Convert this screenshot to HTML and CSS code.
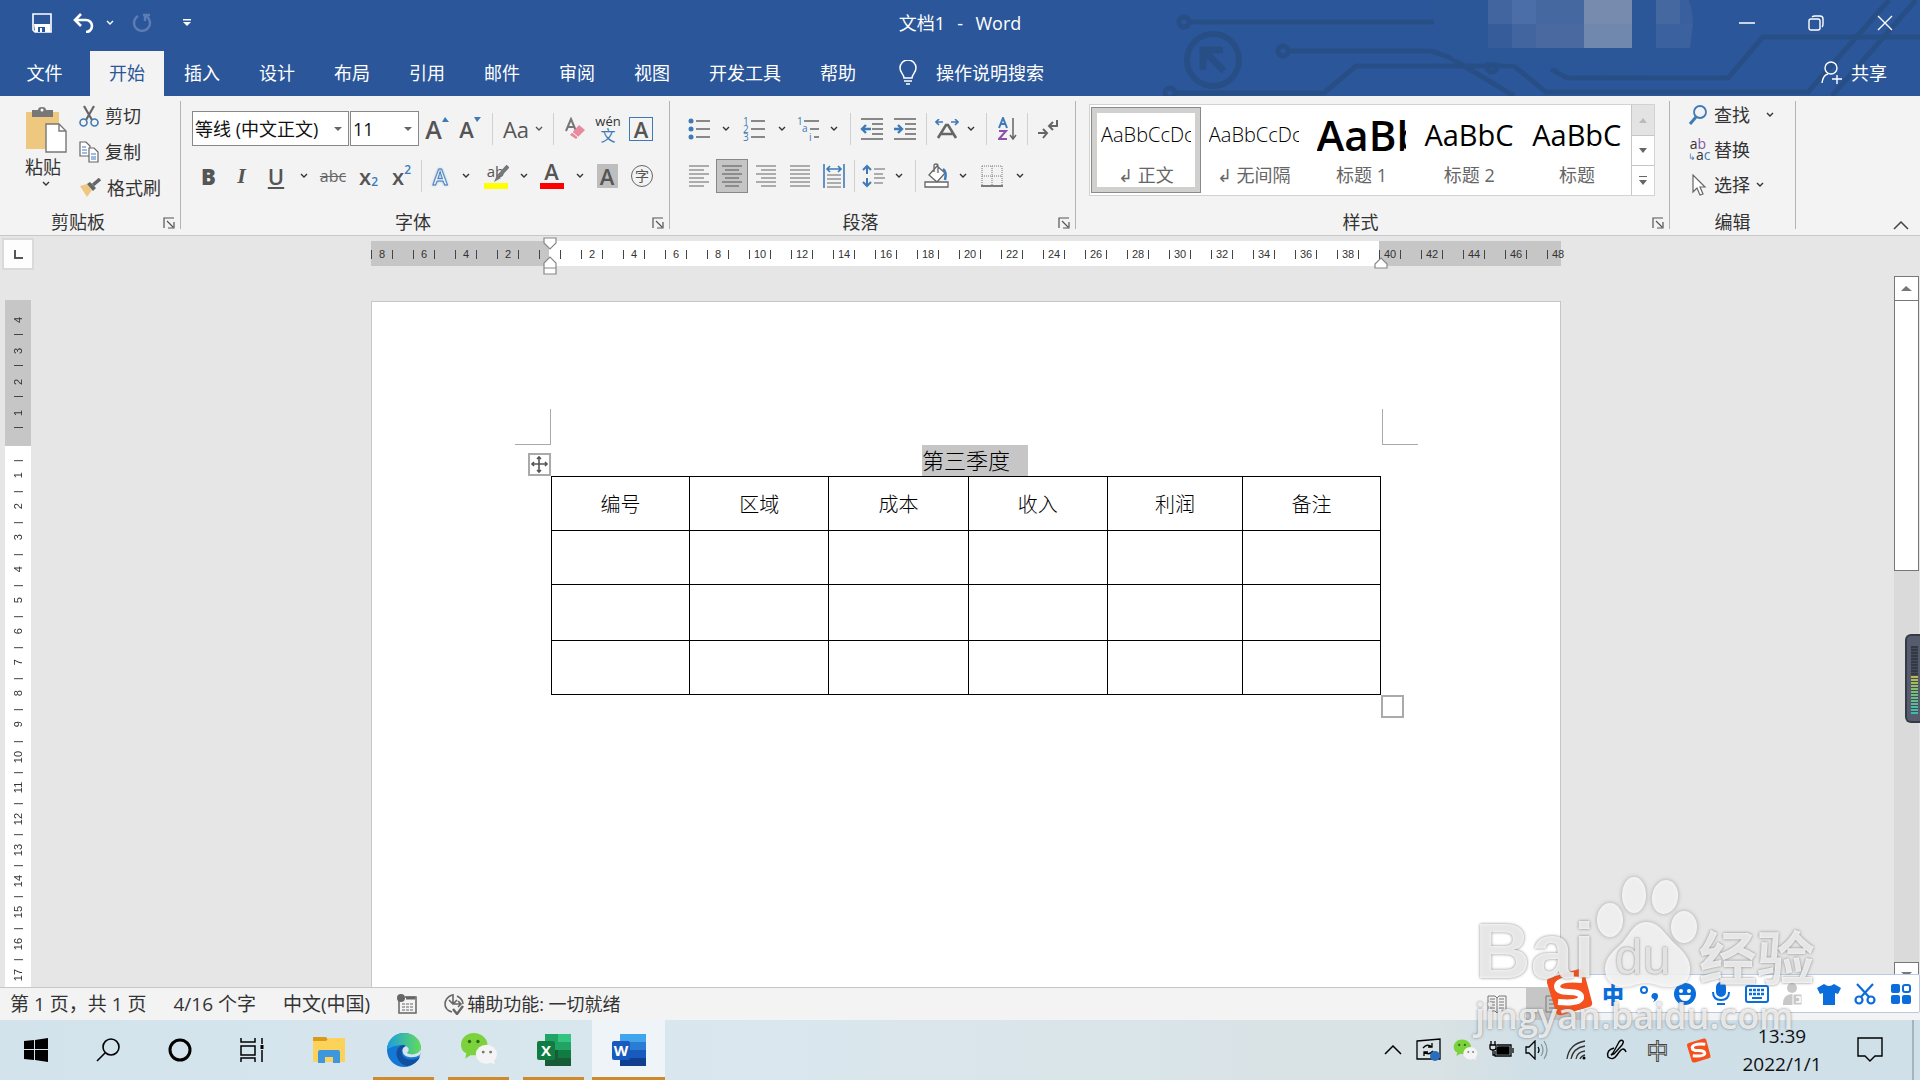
FILE: index.html
```html
<!DOCTYPE html>
<html lang="zh-CN">
<head>
    <meta charset="UTF-8">
    <meta name="viewport" content="width=device-width, initial-scale=1.0">
    <title>文档1 - Word</title>
    <link rel="stylesheet" href="styles.css">
</head>
<body>
    <!-- Shared icons -->
    <svg class="sprite" aria-hidden="true">
        <symbol id="chev" viewBox="0 0 8 6"><path d="M1 1l3 3 3-3" fill="none" stroke="currentColor" stroke-width="1.4"/></symbol>
        <symbol id="launch" viewBox="0 0 12 12"><path d="M1 11V1h10M4 4l6 6M11 5v6H5" fill="none" stroke="#555" stroke-width="1.2"/></symbol>
        <symbol id="sogou" viewBox="0 0 48 48">
            <path d="M7 9L34 1q4-1 5 3l8 30q1 4-3 5l-27 8q-5 1-6-3L2 15q-1-5 5-6z" fill="#f4511e"/>
            <path d="M37 12Q14 10 12 18q0 6 12 6 13 0 12 6-2 6-23 4" fill="none" stroke="#fff" stroke-width="6"/>
        </symbol>
        <symbol id="wechat" viewBox="0 0 36 36">
            <path d="M13 2C6 2 1 7 1 13c0 4 2 7 5 8l-1 5 5-3h5c6 0 11-4 11-10S20 2 13 2z" fill="#7bd23c"/>
            <ellipse cx="25" cy="22" rx="10" ry="9" fill="#f4f4f4"/><path d="M28 29l5 3-1-5z" fill="#f4f4f4"/>
            <g fill="#2d6b12"><circle cx="9" cy="10" r="1.6"/><circle cx="17" cy="10" r="1.6"/></g>
            <g fill="#777"><circle cx="22" cy="20" r="1.4"/><circle cx="29" cy="20" r="1.4"/></g>
        </symbol>
    </svg>

    <header class="top">
        <svg class="circuit" width="760" height="96" viewBox="1160 0 760 96" aria-hidden="true">
            <g fill="none" stroke="#284e86" stroke-width="5">
                <circle cx="1184" cy="22" r="5"/><path d="M1189 22h245"/>
                <circle cx="1213" cy="60" r="26" stroke-width="6"/>
                <path d="M1203 70V50h20M1204 51l20 20" stroke-width="7"/>
                <circle cx="1283" cy="51" r="5"/><path d="M1288 51h143l20 7 63 38"/>
                <circle cx="1170" cy="93" r="5"/><path d="M1176 93h148l32-27h158l32 26h262L1889 0"/>
                <circle cx="1492" cy="67" r="5"/>
                <path d="M1551 69l16 9h161l35-41h157M1832 96L1916 0"/>
            </g>
            <path d="M1434 0h258c4 20 2 34-4 48l-24 22q-50 10-110-2l-100-9q-26-30-20-59z" fill="#2b5697"/>
            <g>
                <path d="M1488 0h24v24h-24z" fill="#43659f"/><path d="M1512 0h24v24h-24z" fill="#4b6da8"/>
                <path d="M1536 0h48v24h-48z" fill="#4668a1"/><path d="M1584 0h48v24h-48z" fill="#768bad"/>
                <path d="M1656 0h24v24h-24z" fill="#4568a0"/><path d="M1680 0h9q4 12 4 24h-13z" fill="#395f9e"/>
                <path d="M1488 24h24v24h-24z" fill="#365c99"/><path d="M1512 24h24v24h-24z" fill="#42659f"/>
                <path d="M1536 24h48v24h-48z" fill="#4969a0"/><path d="M1584 24h48v24h-48z" fill="#7088ae"/>
                <path d="M1656 24h37l-3 24h-34z" fill="#3c619f"/>
            </g>
        </svg>

        <div class="titlebar">
            <div class="quick">
                <button aria-label="保存"><svg width="20" height="20" viewBox="0 0 20 20"><path d="M1 1h18v18H3l-2-2z" fill="none" stroke="#fff" stroke-width="1.6"/><path d="M2 11h16v8H3z" fill="#fff"/><path d="M6 14h7v5H6z" fill="#2b579a"/><path d="M8 15h2v4H8z" fill="#fff"/></svg></button>
                <button aria-label="撤消"><svg width="22" height="20" viewBox="0 0 22 20"><path d="M2 7h11a6 6 0 010 12M8 1L2 7l6 6" fill="none" stroke="#fff" stroke-width="2.6"/></svg></button>
                <button aria-label="撤消列表"><svg width="8" height="6"><use href="#chev"/></svg></button>
                <button aria-label="重复"><svg width="22" height="20" viewBox="0 0 22 20"><path d="M7 3a8 8 0 108 0M12 2h7M14 2v6" fill="none" stroke="#5b7db4" stroke-width="2.4"/></svg></button>
                <button aria-label="自定义快速访问工具栏"><svg width="8" height="8" viewBox="0 0 8 8"><path d="M0 0h8v1.4H0zM0 3h8L4 7z" fill="#fff"/></svg></button>
            </div>
            <h1>文档1&nbsp; <span>-</span> &nbsp;Word</h1>
            <div class="window-buttons">
                <button aria-label="最小化"><svg width="16" height="16"><path d="M0 8h16" stroke="#fff" stroke-width="1.5"/></svg></button>
                <button aria-label="还原"><svg width="16" height="16" viewBox="0 0 16 16" fill="none" stroke="#fff" stroke-width="1.4"><rect x="1" y="4" width="11" height="11" rx="2"/><path d="M4 2q1-1 3-1h5q3 0 3 3v5q0 2-1 3"/></svg></button>
                <button aria-label="关闭"><svg width="16" height="16"><path d="M1 1l14 14M15 1L1 15" stroke="#fff" stroke-width="1.4"/></svg></button>
            </div>
        </div>

        <nav class="tabs">
            <button class="file">文件</button>
            <button class="active">开始</button>
            <button>插入</button>
            <button>设计</button>
            <button>布局</button>
            <button>引用</button>
            <button>邮件</button>
            <button>审阅</button>
            <button>视图</button>
            <button>开发工具</button>
            <button>帮助</button>
            <label class="tell-me">
                <svg width="20" height="26" viewBox="0 0 20 26" fill="none" stroke="#fff" stroke-width="1.5"><path d="M6 18c0-4-4-5-4-10a8 8 0 0116 0c0 5-4 6-4 10zM6 21h8M8 24h4"/></svg>
                <input type="text" placeholder="操作说明搜索">
            </label>
            <button class="share">
                <svg width="22" height="24" viewBox="0 0 22 24" fill="none" stroke="#fff" stroke-width="1.4"><circle cx="10" cy="7" r="6"/><path d="M1 22q1-8 6-9M16 14v9M11 18h10"/></svg>
                共享
            </button>
        </nav>
    </header>

    <section class="ribbon">
        <div class="group clipboard">
            <div class="group-body">
                <button class="paste">
                    <svg width="42" height="46" viewBox="0 0 42 46"><path d="M1 5h33v37H1z" fill="#edc87e"/><path d="M7 3h6q0-3 4-3t4 3h7v7H7z" fill="#777"/><circle cx="17" cy="3" r="1.5" fill="#fff"/><path d="M21 17h13l7 7v21H21z" fill="#fff" stroke="#777" stroke-width="1.4"/><path d="M34 17v7h7" fill="none" stroke="#777" stroke-width="1.4"/></svg>
                    <span>粘贴</span>
                    <svg width="8" height="6"><use href="#chev"/></svg>
                </button>
                <div class="stack">
                    <button><svg width="20" height="22" viewBox="0 0 20 22" fill="none"><path d="M5 1l8 14M15 1L7 15" stroke="#666" stroke-width="2.2"/><circle cx="4.500" cy="17.500" r="3.500" stroke="#3f7ab8" stroke-width="1.6"/><circle cx="15.500" cy="17.500" r="3.500" stroke="#3f7ab8" stroke-width="1.6"/></svg>剪切</button>
                    <button><svg width="20" height="22" viewBox="0 0 20 22" fill="#fff" stroke="#666" stroke-width="1.2"><path d="M1 1h6l4 4v10H1z"/><path d="M10 7h5l4 4v10h-9z"/><path d="M3 6h4M3 9h5M3 12h5M12 13h5M12 16h5M12 18h5" stroke="#3f7ab8"/></svg>复制</button>
                    <button><svg width="22" height="20" viewBox="0 0 22 20"><path d="M1 8l7-2 5 6-5 7z" fill="#edc87e"/><path d="M8 6l3-2 6 6-3 3z" fill="#666"/><path d="M14 7l7-6" stroke="#666" stroke-width="3.500"/></svg>格式刷</button>
                </div>
            </div>
            <div class="group-name">剪贴板<button aria-label="剪贴板选项"><svg width="12" height="12"><use href="#launch"/></svg></button></div>
        </div>

        <div class="group font">
            <div class="group-body rows">
                <div class="tools font-top">
                    <span class="combo"><select aria-label="字体"><option>等线 (中文正文)</option></select></span>
                    <span class="combo size"><select aria-label="字号"><option>11</option></select></span>
                    <button class="glyph big" aria-label="增大字号">A<svg class="tri" width="7" height="5"><path d="M0 5l3-5 4 5z" fill="#3f7ab8"/></svg></button>
                    <button class="glyph" aria-label="减小字号">A<svg class="tri" width="7" height="5"><path d="M0 0h7L3 5z" fill="#3f7ab8"/></svg></button>
                    <i class="sep"></i>
                    <button class="glyph case" aria-label="更改大小写">Aa <svg width="8" height="6"><use href="#chev"/></svg></button>
                    <i class="sep"></i>
                    <button aria-label="清除格式"><svg width="22" height="24" viewBox="0 0 22 24"><path d="M1 14L6 2l5 12M3 10h6" fill="none" stroke="#777" stroke-width="2"/><path d="M14 8l6 5-9 9-6-4z" fill="#e78b9c"/><path d="M7 15l6 5" stroke="#fff"/></svg></button>
                    <button class="phonetic" aria-label="拼音指南"><small>wén</small><b>文</b></button>
                    <button class="boxed" aria-label="字符边框">A</button>
                </div>
                <div class="tools font-bottom">
                    <button class="glyph" aria-label="加粗"><b>B</b></button>
                    <button class="glyph italic" aria-label="倾斜">I</button>
                    <button class="glyph" aria-label="下划线"><u>U</u></button>
                    <button aria-label="下划线样式"><svg width="8" height="6"><use href="#chev"/></svg></button>
                    <button class="strike" aria-label="删除线"><s>abc</s></button>
                    <button class="glyph script" aria-label="下标">x<sub>2</sub></button>
                    <button class="glyph script" aria-label="上标">x<sup>2</sup></button>
                    <i class="sep"></i>
                    <button class="glyph effect" aria-label="文本效果">A</button>
                    <button aria-label="文本效果列表"><svg width="8" height="6"><use href="#chev"/></svg></button>
                    <button class="color yellow" aria-label="突出显示颜色"><span>ab</span><svg class="pen" width="16" height="17" viewBox="0 0 16 17"><path d="M15 1L6 11" stroke="#777" stroke-width="4"/><path d="M4 10l4 3-7 4z" fill="#777"/></svg></button>
                    <button aria-label="突出显示列表"><svg width="8" height="6"><use href="#chev"/></svg></button>
                    <button class="color red" aria-label="字体颜色"><b>A</b></button>
                    <button aria-label="字体颜色列表"><svg width="8" height="6"><use href="#chev"/></svg></button>
                    <button class="shaded" aria-label="字符底纹">A</button>
                    <button class="circled" aria-label="带圈字符">字</button>
                </div>
            </div>
            <div class="group-name">字体<button aria-label="字体选项"><svg width="12" height="12"><use href="#launch"/></svg></button></div>
        </div>

        <div class="group paragraph">
            <div class="group-body rows">
                <div class="tools para-top">
                    <button aria-label="项目符号"><svg width="24" height="24" viewBox="0 0 24 24"><g fill="#3f7ab8"><circle cx="4" cy="4" r="2.500"/><circle cx="4" cy="12" r="2.500"/><circle cx="4" cy="20" r="2.500"/></g><path d="M9 4h14M9 12h14M9 20h14" stroke="#666" stroke-width="1.300"/></svg></button>
                    <button aria-label="项目符号库"><svg width="8" height="6"><use href="#chev"/></svg></button>
                    <button aria-label="编号"><svg width="24" height="24" viewBox="0 0 24 24"><g class="digits"><text x="1" y="8">1</text><text x="1" y="16">2</text><text x="1" y="24">3</text></g><path d="M9 4h14M9 12h14M9 20h14" stroke="#666" stroke-width="1.300"/></svg></button>
                    <button aria-label="编号库"><svg width="8" height="6"><use href="#chev"/></svg></button>
                    <button aria-label="多级列表"><svg width="24" height="24" viewBox="0 0 24 24"><g class="digits"><text x="1" y="8">1</text><text x="6" y="15">a</text><text x="13" y="24">i</text></g><path d="M8 4h15M14 12h9M18 20h5" stroke="#666" stroke-width="1.300"/></svg></button>
                    <button aria-label="多级列表库"><svg width="8" height="6"><use href="#chev"/></svg></button>
                    <i class="sep"></i>
                    <button aria-label="减少缩进量"><svg width="24" height="22" viewBox="0 0 24 22"><path d="M1 1h22M12 6h11M12 11h11M12 16h11M1 21h22" stroke="#666" stroke-width="1.300"/><path d="M11 11H3M6 7l-4 4 4 4" stroke="#3f7ab8" stroke-width="2.400" fill="none"/></svg></button>
                    <button aria-label="增加缩进量"><svg width="24" height="22" viewBox="0 0 24 22"><path d="M1 1h22M12 6h11M12 11h11M12 16h11M1 21h22" stroke="#666" stroke-width="1.300"/><path d="M1 11h8M5 7l4 4-4 4" stroke="#3f7ab8" stroke-width="2.400" fill="none"/></svg></button>
                    <i class="sep"></i>
                    <button aria-label="中文版式"><svg width="24" height="20" viewBox="0 0 24 20"><path d="M3 19l8-13h2l8 13M6 15h12" stroke="#666" stroke-width="2.600" fill="none"/><path d="M8 3H1M4 0L1 3l3 3M16 3h7M20 0l3 3-3 3" stroke="#3f7ab8" stroke-width="1.600" fill="none"/></svg></button>
                    <button aria-label="中文版式列表"><svg width="8" height="6"><use href="#chev"/></svg></button>
                    <i class="sep"></i>
                    <button aria-label="排序"><svg width="20" height="24" viewBox="0 0 20 24" fill="none" stroke-width="2"><path d="M1 11L5 1l4 10M3 7h5" stroke="#3f7ab8"/><path d="M1 14h7L1 22h8" stroke="#8a52a8"/><path d="M15 1v21M12 18l3 4 3-4" stroke="#666" stroke-width="1.500"/></svg></button>
                    <i class="sep"></i>
                    <button aria-label="显示编辑标记"><svg width="22" height="20" viewBox="0 0 22 20" fill="none" stroke="#666" stroke-width="2"><path d="M20 1v6h-7M16 3l-4 4 4 4M1 14h8M6 10l4 4-4 5"/></svg></button>
                </div>
                <div class="tools para-bottom">
                    <button aria-label="左对齐"><svg width="20" height="22" viewBox="0 0 20 22"><path d="M0 1h20M0 5h15M0 9h20M0 13h15M0 17h20M0 21h15" stroke="#666" stroke-width="1.200"/></svg></button>
                    <button class="pressed" aria-label="居中"><svg width="20" height="22" viewBox="0 0 20 22"><path d="M0 1h20M3 5h14M0 9h20M3 13h14M0 17h20M3 21h14" stroke="#555" stroke-width="1.200"/></svg></button>
                    <button aria-label="右对齐"><svg width="20" height="22" viewBox="0 0 20 22"><path d="M0 1h20M5 5h15M0 9h20M5 13h15M0 17h20M5 21h15" stroke="#666" stroke-width="1.200"/></svg></button>
                    <button aria-label="两端对齐"><svg width="20" height="22" viewBox="0 0 20 22"><path d="M0 1h20M0 5h20M0 9h20M0 13h20M0 17h20M0 21h20" stroke="#666" stroke-width="1.200"/></svg></button>
                    <button aria-label="分散对齐"><svg width="22" height="24" viewBox="0 0 22 24"><path d="M1 0v24M21 0v24M4 5h14M7 2L4 5l3 3M15 2l3 3-3 3" stroke="#3f7ab8" stroke-width="1.600" fill="none"/><path d="M4 11h14M4 15h14M4 19h14M4 23h14" stroke="#666" stroke-width="1.200"/></svg></button>
                    <i class="sep"></i>
                    <button aria-label="行距"><svg width="24" height="24" viewBox="0 0 24 24"><path d="M5 2v8M1 6l4-4 4 4M5 14v8M1 18l4 4 4-4" stroke="#3f7ab8" stroke-width="2" fill="none"/><path d="M12 5h11M12 10h9M12 14h11M12 19h9" stroke="#666" stroke-width="1.200"/></svg></button>
                    <button aria-label="行距列表"><svg width="8" height="6"><use href="#chev"/></svg></button>
                    <i class="sep"></i>
                    <button aria-label="底纹"><svg width="26" height="25" viewBox="0 0 26 25" fill="none" stroke="#666" stroke-width="1.300"><path d="M13 3L5 12l8 7 8-9zM10 9V3q0-2 2-2t2 2v7" fill="#fff"/><path d="M19 6q4 3 2 11" stroke="#3f7ab8" stroke-width="2.500"/><path d="M1 19h23v5H1z" fill="#fff"/></svg></button>
                    <button aria-label="底纹颜色"><svg width="8" height="6"><use href="#chev"/></svg></button>
                    <button aria-label="边框"><svg width="22" height="22" viewBox="0 0 22 22"><path d="M1 1h20v20M1 1v20M11 1v20M1 11h20" fill="none" stroke="#777" stroke-dasharray="1 1"/><path d="M0 21h22" stroke="#555" stroke-width="1.500"/></svg></button>
                    <button aria-label="边框列表"><svg width="8" height="6"><use href="#chev"/></svg></button>
                </div>
            </div>
            <div class="group-name">段落<button aria-label="段落设置"><svg width="12" height="12"><use href="#launch"/></svg></button></div>
        </div>

        <div class="group styles">
            <div class="group-body">
                <div class="gallery">
                    <button class="style selected"><span class="sample">AaBbCcDc</span><span>↲ 正文</span></button>
                    <button class="style"><span class="sample">AaBbCcDc</span><span>↲ 无间隔</span></button>
                    <button class="style h-one"><span class="sample">AaBb</span><span>标题 1</span></button>
                    <button class="style h-two"><span class="sample">AaBbC</span><span>标题 2</span></button>
                    <button class="style h-two"><span class="sample">AaBbC</span><span>标题</span></button>
                    <div class="gallery-scroll">
                        <button disabled aria-label="上一行"><svg width="8" height="5"><path d="M0 5l4-5 4 5z" fill="#bbb"/></svg></button>
                        <button aria-label="下一行"><svg width="8" height="5"><path d="M0 0h8L4 5z" fill="#666"/></svg></button>
                        <button aria-label="其他样式"><svg width="8" height="9"><path d="M0 0h8v1H0zM0 4h8L4 9z" fill="#666"/></svg></button>
                    </div>
                </div>
            </div>
            <div class="group-name">样式<button aria-label="样式选项"><svg width="12" height="12"><use href="#launch"/></svg></button></div>
        </div>

        <div class="group editing">
            <div class="group-body">
                <div class="stack">
                    <button><svg width="20" height="20" viewBox="0 0 20 20" fill="none" stroke="#3f7ab8"><circle cx="12" cy="7" r="6" stroke-width="1.800"/><path d="M8 12l-6 7" stroke-width="3"/></svg>查找<svg class="far" width="8" height="6"><use href="#chev"/></svg></button>
                    <button><span class="replace-icon"><span>a<em>b</em></span><span><i>↳</i>a<i>c</i></span></span>替换</button>
                    <button><svg width="20" height="22" viewBox="0 0 20 22"><path d="M5 1v17l4-4 3 7 3-1-3-7h5z" fill="#fff" stroke="#666" stroke-width="1.200"/></svg>选择<svg width="8" height="6"><use href="#chev"/></svg></button>
                </div>
            </div>
            <div class="group-name">编辑</div>
        </div>
        <button class="collapse" aria-label="折叠功能区"><svg width="16" height="9"><path d="M1 8l7-7 7 7" fill="none" stroke="#444" stroke-width="1.500"/></svg></button>
    </section>

    <main class="workspace">
        <div class="left-rail">
            <button class="tab-stop" aria-label="制表符"><svg width="9" height="9"><path d="M1 0v8h8" fill="none" stroke="#555" stroke-width="2"/></svg></button>
            <div class="v-ruler">
                <div class="v-margin"><span>4</span><span>3</span><span>2</span><span>1</span></div>
                <div class="v-body"><span>1</span><span>2</span><span>3</span><span>4</span><span>5</span><span>6</span><span>7</span><span>8</span><span>9</span><span>10</span><span>11</span><span>12</span><span>13</span><span>14</span><span>15</span><span>16</span><span>17</span></div>
            </div>
        </div>

        <div class="canvas">
            <div class="h-ruler">
                <span>8</span><span>6</span><span>4</span><span>2</span><span>&nbsp;</span><span>2</span><span>4</span><span>6</span><span>8</span><span>10</span><span>12</span><span>14</span><span>16</span><span>18</span><span>20</span><span>22</span><span>24</span><span>26</span><span>28</span><span>30</span><span>32</span><span>34</span><span>36</span><span>38</span><span>40</span><span>42</span><span>44</span><span>46</span><span>48</span>
                <svg class="indent left" width="14" height="38" viewBox="0 0 14 38"><path d="M1 1h12v5l-6 6-6-6zM1 37V26l6-6 6 6v11zM1 31h12" fill="#fff" stroke="#888" stroke-width="1.200"/></svg>
                <svg class="indent right" width="14" height="12" viewBox="0 0 14 12"><path d="M1 11V7l6-6 6 6v4z" fill="#fff" stroke="#888" stroke-width="1.200"/></svg>
            </div>
            <article class="page">
                <i class="corner left"></i>
                <i class="corner right"></i>
                <p class="doc-title"><mark>第三季度</mark></p>
                <div class="table-box">
                    <table>
                        <colgroup><col class="wide"><col><col><col><col class="narrow"><col class="wide"></colgroup>
                        <tr><th>编号</th><th>区域</th><th>成本</th><th>收入</th><th>利润</th><th>备注</th></tr>
                        <tr><td></td><td></td><td></td><td></td><td></td><td></td></tr>
                        <tr class="tall"><td></td><td></td><td></td><td></td><td></td><td></td></tr>
                        <tr><td></td><td></td><td></td><td></td><td></td><td></td></tr>
                    </table>
                    <svg class="move" width="23" height="23" viewBox="0 0 23 23" fill="none"><path d="M1 1h21v21H1z" fill="#fff" stroke="#aaa" stroke-width="2"/><path d="M11 4v15M4 11h15M9 6l2-2 2 2M9 17l2 2 2-2M6 9l-2 2 2 2M17 9l2 2-2 2" stroke="#555" stroke-width="1.600"/></svg>
                    <i class="resize"></i>
                </div>
            </article>
        </div>

        <div class="scrollbar">
            <button aria-label="向上滚动"><svg width="11" height="5"><path d="M0 5l5-5 6 5z" fill="#777"/></svg></button>
            <div class="thumb"></div>
            <button class="down" aria-label="向下滚动"><svg width="11" height="5"><path d="M0 0h11L6 5z" fill="#777"/></svg></button>
            <div class="meter"></div>
        </div>
    </main>

    <footer class="status">
        <span class="count">第 1 页，共 1 页</span>
        <span class="count">4/16 个字</span>
        <span class="count">中文(中国)</span>
        <svg width="20" height="20" viewBox="0 0 20 20" fill="none" stroke="#666"><path d="M2 6v13h17V3H8" stroke-width="1.500"/><circle cx="4" cy="4" r="4" fill="#666" stroke="none"/><path d="M9 4h9" stroke-width="3"/><path d="M5 10h12M5 13h12M5 16h12" stroke-dasharray="3 1"/></svg>
        <span class="access"><svg width="20" height="22" viewBox="0 0 20 22" fill="none" stroke="#666" stroke-width="1.600"><path d="M8 2Q1 5 1 11t7 8M13 3q6 3 6 8M9 1v9M5 7l4 4 4-4M10 11h7M14 8l3 3-3 3"/><path d="M9 16l4 5 6-8" stroke-width="2.400"/></svg>辅助功能: 一切就绪</span>
        <div class="views">
            <button aria-label="阅读视图"><svg width="20" height="18" viewBox="0 0 20 18" fill="none" stroke="#777"><path d="M1 1h7l2 2 2-2h7v15h-7l-2 2-2-2H1zM10 3v15M3 4h5M3 7h5M3 10h5M3 13h5M12 4h5M12 7h5M12 10h5M12 13h5"/></svg></button>
            <button class="on" aria-label="页面视图"><svg width="20" height="18" viewBox="0 0 20 18" fill="none" stroke="#777"><path d="M1 1h18v16H1zM4 5h12M4 9h12M4 13h12"/></svg></button>
        </div>
    </footer>

    <div class="taskbar">
        <div class="system">
            <button aria-label="开始"><svg width="24" height="24" viewBox="0 0 24 24"><path d="M0 3l10-1v9H0zM11 2l13-2v11H11zM0 12h10v10L0 21zM11 12h13v12l-13-2z"/></svg></button>
            <button aria-label="搜索"><svg width="24" height="24" viewBox="0 0 24 24" fill="none" stroke="#000" stroke-width="1.600"><circle cx="15" cy="9" r="8"/><path d="M9 15l-8 8"/></svg></button>
            <button aria-label="Cortana"><svg width="24" height="24"><circle cx="12" cy="12" r="10" fill="none" stroke="#000" stroke-width="3"/></svg></button>
            <button aria-label="任务视图"><svg width="26" height="24" viewBox="0 0 26 24" fill="none" stroke="#000" stroke-width="1.500"><path d="M2 0v4h14V0M2 8h14v9H2zM2 24v-4h14v4M23 0v6M23 12v12"/><path d="M23 7v4" stroke-width="3"/></svg></button>
        </div>
        <div class="apps">
            <button aria-label="文件资源管理器"><svg width="34" height="28" viewBox="0 0 34 28"><path d="M1 1h13l3 4H1z" fill="#d99b17"/><path d="M1 5h13l3-3h16v24H1z" fill="#fcd25b"/><path d="M6 27V16q0-2 2-2h18q2 0 2 2v11h-7v-6h-8v6z" fill="#3d97dc"/></svg></button>
            <button class="open" aria-label="Microsoft Edge"><svg width="36" height="36" viewBox="0 0 36 36"><defs><linearGradient id="edge-top"><stop stop-color="#1b9de2"/><stop offset="1" stop-color="#62dc58"/></linearGradient></defs><circle cx="18" cy="18" r="17" fill="#1478d4"/><path d="M1 18C1 8 9 1 18 1s17 6 17 15c0 7-9 9-15 6 5-3 2-9-4-9-8 0-15 4-15 5z" fill="url(#edge-top)"/><path d="M16 13c-10 5-5 19 5 21 7-1 11-5 13-9-8 5-17 2-18-3-1-4 1-7 4-8q-2-1-4-1z" fill="#124f9e"/><path d="M20 14q-5 2-3 7 1 3 6 4 6 1 11-2 2-3 1-6c-2 5-9 7-14 4 3-3 2-5-1-7z" fill="#d6e4ed"/></svg></button>
            <button class="open" aria-label="微信"><svg width="38" height="38"><use href="#wechat"/></svg></button>
            <button class="open" aria-label="Excel"><svg width="36" height="34" viewBox="0 0 36 34"><path d="M9 1h26v32H9z" fill="#185c37"/><path d="M9 1h13v16H9z" fill="#21a366"/><path d="M22 1h13v8H22z" fill="#33c481"/><path d="M22 9h13v8H22z" fill="#21a366"/><path d="M22 17h13v8H22z" fill="#107c41"/><rect x="1" y="8" width="18" height="19" rx="2" fill="#107c41"/><text class="logo-letter" x="10" y="23">X</text></svg></button>
            <button class="open current" aria-label="Word"><svg width="36" height="34" viewBox="0 0 36 34"><path d="M9 1h26v8H9z" fill="#41a5ee"/><path d="M9 9h26v8H9z" fill="#2b7cd3"/><path d="M9 17h26v8H9z" fill="#185abd"/><path d="M9 25h26v8H9z" fill="#103f91"/><rect x="1" y="8" width="18" height="19" rx="2" fill="#185abd"/><text class="logo-letter" x="10" y="23">W</text></svg></button>
        </div>
        <div class="tray">
            <button aria-label="显示隐藏的图标"><svg width="18" height="10"><path d="M1 9l8-8 8 8" fill="none" stroke="#000" stroke-width="1.500"/></svg></button>
            <button aria-label="同步"><svg width="26" height="24" viewBox="0 0 26 24" fill="none" stroke="#000" stroke-width="1.300"><path d="M1 3l23-2v20L1 21z"/><path d="M7 10q4-5 9-1M16 5v4h-4M17 13q-4 5-9 1M8 18v-4h4"/><circle cx="19" cy="18" r="5" fill="#2a6ebb" stroke="none"/></svg></button>
            <button aria-label="微信"><svg width="25" height="25"><use href="#wechat"/></svg></button>
            <button aria-label="电源"><svg width="25" height="20" viewBox="0 0 25 20" fill="none" stroke="#000" stroke-width="1.300"><path d="M8 5h14v11H6v-5"/><path d="M9 7h11v7H8V9z" fill="#000"/><path d="M24 8v5M2 1v4M6 1v4M1 5h6v3q0 2-3 2T1 8zM4 10v5h2"/></svg></button>
            <button aria-label="音量"><svg width="24" height="20" viewBox="0 0 24 20" fill="none" stroke="#000" stroke-width="1.300"><path d="M1 7h3l6-6v18l-6-6H1zM13 7q2 3 0 6"/><path d="M16 4q4 6 0 12M19 1q6 9 0 18" stroke="#899"/></svg></button>
            <button class="wide" aria-label="网络"><svg width="20" height="20" viewBox="0 0 20 20" fill="none" stroke="#333" stroke-width="1.300"><path d="M1 19Q3 4 19 1M5 19Q7 8 19 6M10 19q1-7 9-8M14 19q1-3 5-4"/><circle cx="18" cy="18" r="1.500" fill="#000" stroke="none"/></svg></button>
            <button class="wide" aria-label="Windows Ink"><svg width="22" height="22" viewBox="0 0 22 22" fill="none" stroke="#000" stroke-width="1.400"><path d="M7 14L13 3q2-3 4-1 1 1-1 4l-8 9-3 1zM8 9q-8 2-6 9 5 4 9-2t6-6 3 3"/></svg></button>
            <button class="wide ime-mode" aria-label="输入模式">中</button>
            <button class="wide" aria-label="搜狗输入法"><svg width="25" height="25"><use href="#sogou"/></svg></button>
        </div>
        <time class="clock">13:39<br>2022/1/1</time>
        <button class="notice" aria-label="通知"><svg width="26" height="26" viewBox="0 0 26 26"><path d="M1 1h24v18h-7l-5 5-5-5H1z" fill="none" stroke="#000" stroke-width="1.400"/></svg></button>
    </div>

    <!-- Input method bar floats over the desktop -->
    <div class="ime">
        <svg class="ime-logo" width="48" height="48"><use href="#sogou"/></svg>
        <button class="ime-lang">中</button>
        <button aria-label="标点"><svg width="20" height="20" viewBox="0 0 20 20"><circle cx="5" cy="6" r="3" fill="none" stroke="#0a6ddb" stroke-width="2"/><path d="M16 9a3 3 0 013 3q0 4-5 6 2-2 1-3a3 3 0 011-6z" fill="#0a6ddb"/></svg></button>
        <button aria-label="表情"><svg width="22" height="22" viewBox="0 0 22 22"><circle cx="11" cy="11" r="11" fill="#0a6ddb"/><g fill="#fff"><circle cx="7" cy="8" r="2"/><circle cx="15" cy="8" r="2"/><path d="M5 12h12q-1 6-6 6t-6-6z"/></g></svg></button>
        <button aria-label="语音"><svg width="20" height="24" viewBox="0 0 20 24" fill="none" stroke="#0a6ddb" stroke-width="2"><rect x="6" y="1" width="8" height="13" rx="4" fill="#0a6ddb"/><path d="M2 10q0 8 8 8t8-8M6 22h8"/></svg></button>
        <button aria-label="软键盘"><svg width="24" height="18" viewBox="0 0 24 18"><rect x="1" y="1" width="22" height="16" rx="2" fill="#fff" stroke="#0a6ddb" stroke-width="2"/><path d="M4 5h16M4 9h16" stroke="#0a6ddb" stroke-width="2.500" stroke-dasharray="3 1"/><path d="M7 13h10" stroke="#0a6ddb" stroke-width="2"/></svg></button>
        <button aria-label="账户"><svg width="22" height="24" viewBox="0 0 22 24" fill="#c8c8c8"><circle cx="10" cy="6" r="5"/><path d="M1 22q0-10 9-10 4 0 6 1v10H1z"/><path d="M11 12h9v11h-9z" stroke="#fff"/><path d="M14 15h4v5h-4" fill="none" stroke="#fff" stroke-width="1.500"/></svg></button>
        <button aria-label="皮肤"><svg width="24" height="22" viewBox="0 0 24 22"><path d="M7 1q5 4 10 0l7 4-3 6-3-1v12H6V10l-3 1-3-6z" fill="#0a6ddb"/></svg></button>
        <button aria-label="截图"><svg width="22" height="22" viewBox="0 0 22 22" fill="none" stroke="#0a6ddb" stroke-width="2.200"><path d="M3 1l12 13M19 1L7 14"/><circle cx="5" cy="17" r="3.500"/><circle cx="17" cy="17" r="3.500"/></svg></button>
        <button aria-label="工具箱"><svg width="20" height="20" viewBox="0 0 20 20" fill="#0a6ddb"><rect width="9" height="9" rx="2"/><rect y="11" width="9" height="9" rx="2"/><rect x="11" y="11" width="9" height="9" rx="2"/><rect x="12" y="1" width="7" height="7" rx="2" fill="none" stroke="#0a6ddb" stroke-width="2"/></svg></button>
    </div>

    <div class="watermark">
        <div class="brand">
            <span>Bai</span>
            <span class="paw">
                <svg width="104" height="112" viewBox="0 0 104 112"><ellipse cx="15" cy="44" rx="13" ry="17"/><ellipse cx="39" cy="19" rx="12" ry="18"/><ellipse cx="70" cy="21" rx="13" ry="17" transform="rotate(10 70 21)"/><ellipse cx="89" cy="51" rx="13" ry="16"/><path d="M51 46c13 0 18 11 28 21 9 8 17 16 16 28-1 13-10 16-21 16-12 0-13-4-23-4s-12 4-23 4c-10 0-18-7-18-18 0-12 9-18 18-27 8-10 12-20 23-20z"/></svg>
                <b>du</b>
            </span>
            <span class="exp">经验</span>
        </div>
        <div class="site">jingyan.baidu.com</div>
    </div>
</body>
</html>
```
FILE: styles.css
```css
* {
    margin: 0;
    padding: 0;
    box-sizing: border-box;
}

body {
    height: 100vh;
    display: flex;
    flex-direction: column;
    overflow: hidden;
    position: relative;
    font-family: "Open Sans", "Noto Sans CJK SC", sans-serif;
    font-size: 18px;
    line-height: 24px;
    color: #333;
    background: #e6e6e6;
}

button, input, select {
    font: inherit;
    color: inherit;
    background: none;
    border: 0;
}

button {
    display: flex;
    align-items: center;
    justify-content: center;
    white-space: nowrap;
}

svg {
    display: block;
    flex: none;
}

i, em {
    font-style: normal;
}

.sprite {
    position: absolute;
    width: 0;
    height: 0;
}

/* Title bar and tabs */
.top {
    position: relative;
    background: #2b579a;
    color: #fff;
}

.circuit {
    position: absolute;
    right: 0;
    top: 0;
}

.titlebar {
    position: relative;
    height: 51px;
    display: grid;
    grid-template-columns: 1fr auto 1fr;
    align-items: center;
    padding-bottom: 5px;
}

.titlebar h1 {
    font-size: 18px;
    font-weight: 400;
}

.titlebar h1 span {
    padding: 0 3px;
}

.quick {
    display: grid;
    grid-template-columns: 48px 36px 16px 48px 42px;
    padding-left: 18px;
}

.window-buttons {
    display: flex;
    justify-content: flex-end;
    padding-right: 1px;
}

.window-buttons button {
    width: 69px;
    height: 46px;
}

.tabs {
    position: relative;
    display: flex;
    align-items: stretch;
    height: 45px;
}

.tabs button {
    padding: 0 19px 2px;
    margin-right: 1px;
}

.tabs .file {
    width: 89px;
}

.tabs .active {
    background: #f3f3f3;
    color: #2b579a;
}

.tell-me {
    display: flex;
    align-items: center;
    gap: 18px;
    padding: 0 0 2px 22px;
}

.tell-me input {
    width: 120px;
}

.tell-me input::placeholder {
    color: #fff;
}

.tabs .share {
    margin-left: auto;
    margin-right: 14px;
    gap: 8px;
}

/* Ribbon */
.ribbon {
    display: flex;
    position: relative;
    height: 140px;
    padding: 5px 0 6px;
    background: #f3f3f3;
    border-bottom: 1px solid #c8c8c8;
}

.group {
    display: flex;
    flex: none;
    flex-direction: column;
    border-right: 1px solid #b4b4b4;
}

.group-body {
    display: flex;
    height: 112px;
}

.group-name {
    position: relative;
    height: 16px;
    line-height: 18px;
    padding-right: 24px;
    text-align: center;
}

.group-name button {
    position: absolute;
    right: 5px;
    bottom: 0;
}

.clipboard { width: 181px; }
.font { width: 489px; }
.paragraph { width: 406px; }
.editing { width: 126px; margin-right: 124px; }

.styles {
    flex: 1;
    min-width: 0;
}

.editing .group-name {
    padding-right: 0;
}

.paste {
    flex-direction: column;
    justify-content: flex-start;
    width: 74px;
    padding: 6px 0 0 18px;
    gap: 7px;
}

.paste span {
    line-height: 14px;
    padding-right: 6px;
}

.stack {
    display: flex;
    flex-direction: column;
    justify-content: space-between;
    padding: 2px 0 12px 5px;
}

.stack button {
    justify-content: flex-start;
    gap: 6px;
    line-height: 26px;
}

.editing .stack {
    padding: 1px 0 15px 18px;
}

.stack .far {
    margin-left: 10px;
}

.replace-icon {
    display: flex;
    flex-direction: column;
    width: 20px;
    font-size: 14px;
    line-height: 11px;
}

.replace-icon em { color: #8a52a8; }
.replace-icon i { color: #3f7ab8; }
.replace-icon i:first-child { font-size: 9px; }

.rows {
    flex-direction: column;
    padding: 9px 0 0 11px;
    gap: 10px;
}

.tools {
    display: grid;
    height: 37px;
    align-items: center;
    justify-items: center;
}

.font-top { grid-template-columns: 157px 71px 34px 32px 13px 48px 13px 32px 32px 34px; }
.font-bottom { grid-template-columns: 33px 33px 36px 20px 38px 33px 33px 7px 30px 21px 39px 17px 39px 17px 38px 32px; }
.para-top { grid-template-columns: 35px 19px 38px 17px 36px 16px 16px 27px 39px 4px 37px 11px 21px 21px 18px 24px; }
.para-bottom { grid-template-columns: 35px 32px 36px 32px 36px 5px 34px 15px 18px 25px 28px 29px 27px; }

.sep {
    width: 1px;
    height: 32px;
    background: #d0d0d0;
}

.combo {
    position: relative;
    width: 157px;
}

.combo.size {
    width: 69px;
}

.combo select {
    appearance: none;
    display: block;
    width: 100%;
    height: 35px;
    padding-left: 2px;
    border: 1px solid #888;
    background: #fff;
    color: #111;
}

.combo::after {
    content: "";
    position: absolute;
    right: 7px;
    top: 16px;
    border: 4px solid transparent;
    border-top-color: #666;
}

.glyph {
    font-size: 22px;
    font-weight: 600;
    color: #555;
}

.glyph.big {
    font-size: 25px;
}

.glyph .tri {
    align-self: flex-start;
}

.glyph.case {
    gap: 6px;
    font-weight: 400;
}

.italic {
    font-family: "Liberation Serif", serif;
    font-style: italic;
    font-weight: 700;
}

.strike {
    color: #666;
    font-size: 16px;
}

.script sub, .script sup {
    font-size: 12px;
    line-height: 12px;
    color: #3f7ab8;
}

.script sub { align-self: flex-end; }
.script sup { align-self: flex-start; }

.effect {
    color: #fff;
    -webkit-text-stroke: 1px #3f7ab8;
    text-shadow: 0 0 3px #7fb2e8;
}

.phonetic {
    flex-direction: column;
}

.phonetic small {
    font-size: 13px;
    line-height: 12px;
}

.phonetic b {
    font-size: 15px;
    line-height: 16px;
    font-weight: 400;
    color: #3f7ab8;
}

.boxed, .shaded {
    width: 24px;
    height: 24px;
    border: 1px solid #3f7ab8;
    font-weight: 600;
    font-size: 22px;
    color: #555;
}

.shaded {
    width: 21px;
    border: 0;
    background: #bebebe;
}

.circled {
    width: 22px;
    height: 22px;
    border: 1px solid #666;
    border-radius: 50%;
    font-size: 14px;
    color: #555;
}

.color {
    position: relative;
    width: 24px;
    height: 26px;
    padding-bottom: 4px;
    border-bottom: 6px solid #ff0;
    color: #555;
    font-size: 15px;
}

.color.red {
    border-color: #f00;
    font-size: 22px;
}

.color b {
    font-weight: 600;
}

.color .pen {
    position: absolute;
    right: -1px;
    top: 2px;
}

.digits text {
    font-family: "Open Sans", sans-serif;
    font-size: 10px;
    fill: #3f7ab8;
}

.pressed {
    width: 32px;
    height: 34px;
    background: #c5c5c5;
    border: 1px solid #888;
}

.gallery {
    display: flex;
    flex: 1;
    min-width: 0;
    height: 92px;
    margin: 3px 14px 0 13px;
    border: 1px solid #d2d2d2;
    background: #fff;
}

.style {
    flex: 1;
    min-width: 0;
    flex-direction: column;
    justify-content: space-between;
    margin: 3px 0;
    padding: 4px 4px 0;
    border: 5px solid transparent;
    font-size: 18px;
    color: #666;
}

.style.selected {
    margin-left: 2px;
    border-color: #d0d0ce;
    outline: 1px solid #8a8a8a;
}

.sample {
    width: 100%;
    height: 40px;
    line-height: 36px;
    overflow: hidden;
    text-align: left;
    font-size: 20px;
    font-weight: 300;
    color: #000;
}

.h-one .sample {
    font-size: 42px;
    font-weight: 600;
}

.h-two .sample {
    font-size: 29px;
    font-weight: 400;
}

.gallery-scroll {
    display: grid;
    grid-template-rows: 1fr 1fr 1fr;
    width: 23px;
    border-left: 1px solid #c6c6c6;
}

.gallery-scroll button + button {
    border-top: 1px solid #c6c6c6;
}

.gallery-scroll button:disabled {
    background: #e3e3e3;
}

.collapse {
    position: absolute;
    right: 11px;
    bottom: 5px;
}

/* Document area */
.workspace {
    flex: 1;
    min-height: 0;
    display: grid;
    grid-template-columns: 38px 1fr 26px;
    grid-template-rows: 100%;
    overflow: hidden;
}

.left-rail {
    display: flex;
    flex-direction: column;
    gap: 30px;
    padding-top: 2px;
    min-height: 0;
}

.tab-stop {
    flex: none;
    width: 32px;
    height: 32px;
    margin-left: 2px;
    background: #fdfdfd;
    border: 2px solid #dadada;
}

.v-ruler {
    flex: 1;
    min-height: 0;
    width: 26px;
    margin: 0 0 -3px 5px;
    display: flex;
    flex-direction: column;
    background: #fff;
    font: 11px/12px "Liberation Sans", sans-serif;
}

.v-margin {
    height: 146px;
    padding-top: 4px;
    background: #c6c6c6;
}

.v-body {
    flex: 1;
    display: flex;
    flex-direction: column;
    padding-top: 14px;
}

.v-ruler span {
    position: relative;
    display: flex;
    flex: 1;
    justify-content: center;
    align-items: center;
    width: 26px;
    writing-mode: vertical-rl;
    transform: rotate(180deg);
}

.v-margin span {
    height: 31px;
}

.v-ruler span::before {
    content: "";
    position: absolute;
    left: 8px;
    bottom: 0;
    width: 9px;
    height: 1px;
    background: #444;
}

.v-margin span::before {
    bottom: auto;
    top: 0;
}

.canvas {
    display: flex;
    flex-direction: column;
    align-items: center;
    overflow: hidden;
}

.h-ruler {
    position: relative;
    flex: none;
    display: flex;
    align-items: center;
    width: 1190px;
    height: 25px;
    padding-top: 2px;
    margin: 5px 0 35px;
    background: linear-gradient(90deg, #c6c6c6 178px, #fff 178px, #fff 1008px, #c6c6c6 1008px);
    font: 11px/9px "Liberation Sans", sans-serif;
}

.h-ruler span {
    flex: none;
    display: grid;
    grid-template-columns: 20px 21px;
    justify-items: center;
    width: 42px;
    height: 9px;
    border-left: 1px solid #444;
}

.h-ruler span::after {
    content: "";
    justify-self: start;
    width: 1px;
    height: 9px;
    background: #444;
}

.h-ruler span:nth-of-type(29)::after {
    display: none;
}

.indent {
    position: absolute;
}

.indent.left {
    left: 172px;
    top: -4px;
}

.indent.right {
    left: 1003px;
    top: 16px;
}

.page {
    position: relative;
    flex: 1 0 auto;
    width: 1190px;
    padding: 143px 179px 0;
    background: #fff;
    border: 1px solid #c6c6c6;
    border-bottom: 0;
    color: #000;
}

.corner {
    position: absolute;
    top: 107px;
    width: 36px;
    height: 36px;
    border-bottom: 1px solid #aaa;
}

.corner.left {
    left: 143px;
    border-right: 1px solid #aaa;
}

.corner.right {
    right: 142px;
    border-left: 1px solid #aaa;
}

.doc-title {
    height: 31px;
    padding-left: 18px;
    text-align: center;
    font: 300 22px/29px "Noto Sans CJK SC", sans-serif;
}

.doc-title mark {
    display: inline-block;
    height: 31px;
    padding-right: 18px;
    background: #c6c6c6;
    color: #000;
}

.table-box {
    position: relative;
}

table {
    width: 100%;
    table-layout: fixed;
    border-collapse: collapse;
}

.wide { width: 138px; }
.narrow { width: 135px; }

th, td {
    height: 54px;
    border: 1px solid #000;
    font: 300 20px/30px "Noto Sans CJK SC", sans-serif;
}

.tall td {
    height: 56px;
}

.move {
    position: absolute;
    left: -23px;
    top: -23px;
}

.resize {
    position: absolute;
    left: 100%;
    top: 100%;
    width: 23px;
    height: 23px;
    border: 2px solid #aaa;
}

.scrollbar {
    position: relative;
    display: flex;
    flex-direction: column;
    width: 25px;
    margin-top: 40px;
    background: #dadada;
}

.scrollbar button {
    height: 25px;
    border: 1px solid #777;
    background: #fff;
}

.scrollbar .down {
    margin-top: auto;
}

.thumb {
    height: 270px;
    background: #fff;
    border: 1px solid #777;
    border-top: 0;
}

.meter {
    position: absolute;
    right: -1px;
    top: 358px;
    width: 15px;
    height: 89px;
    border: 2px solid #353a46;
    border-right: 0;
    border-radius: 6px 0 0 6px;
    background:
        repeating-linear-gradient(transparent 0 2px, #454b59 2px 3px) 4px 10px / 7px 68px no-repeat,
        linear-gradient(#343946 44%, #c4b94a 44%, #7fbf73 65%, #3fb8ae) 4px 10px / 7px 68px no-repeat,
        #565c6d;
}

/* Status bar */
.status {
    display: flex;
    align-items: center;
    gap: 27px;
    height: 33px;
    padding: 0 10px;
    background: #f3f3f3;
    border-top: 1px solid #c6c6c6;
    white-space: nowrap;
}

.count {
    font-size: 19px;
}

.access {
    display: flex;
    align-items: center;
    gap: 3px;
}

.views {
    display: flex;
    margin: 0 326px 0 auto;
}

.views button {
    width: 58px;
    height: 32px;
}

.views .on {
    background: #c6c6c6;
}

/* Taskbar */
.taskbar {
    display: flex;
    height: 60px;
    background: linear-gradient(90deg, #d2e3ec, #dae7ee 40%, #d9e2e4 75%, #cfdfe7 80%, #cfe0e9);
    color: #111;
}

.taskbar button {
    height: 60px;
}

.system, .apps, .tray {
    display: flex;
}

.system button {
    width: 72px;
}

.apps {
    margin-left: 3px;
}

.apps button {
    width: 61px;
    margin: 0 7px;
    border-top: 3px solid transparent;
    border-bottom: 3px solid transparent;
}

.apps .open {
    border-bottom-color: #cf8a2b;
}

.apps .current {
    width: 73px;
    margin: 0 1px;
    background: #eef4f7;
    border-top-color: #eef4f7;
}

.logo-letter {
    font: 700 15px "Open Sans", sans-serif;
    fill: #fff;
    text-anchor: middle;
}

.tray {
    margin-left: auto;
}

.tray button {
    width: 36px;
}

.tray .wide {
    width: 41px;
}

.ime-mode {
    font-size: 22px;
    color: #fff;
    -webkit-text-stroke: 1px #444;
}

.clock {
    width: 126px;
    padding: 2px 0;
    text-align: center;
    font-size: 19px;
    line-height: 28px;
}

.notice {
    width: 50px;
    margin-right: 17px;
}

.taskbar::after {
    content: "";
    width: 2px;
    margin-right: 6px;
    background: #a5b4bd;
}

/* Input method bar */
.ime {
    position: absolute;
    right: 0;
    bottom: 67px;
    display: flex;
    align-items: center;
    height: 39px;
    padding-left: 24px;
    background: #fff;
    border: 1px solid #b9cbe3;
    border-radius: 2px;
}

.ime button {
    width: 36px;
}

.ime-logo {
    position: absolute;
    left: -26px;
    top: -7px;
}

.ime-lang {
    font-weight: 900;
    font-size: 22px;
    color: #0a6ddb;
}

/* Watermark */
.watermark {
    position: absolute;
    right: 105px;
    bottom: 42px;
    width: 340px;
    color: rgba(255, 255, 255, 0.8);
    text-shadow: 0 0 3px rgba(100, 100, 100, 0.8);
    pointer-events: none;
}

.brand {
    display: flex;
    align-items: flex-end;
    height: 114px;
    margin-bottom: 6px;
    font: 700 77px/74px "Liberation Sans", sans-serif;
}

.paw {
    position: relative;
    fill: rgba(255, 255, 255, 0.8);
    filter: drop-shadow(0 0 2px rgba(100, 100, 100, 0.6));
}

.paw b {
    position: absolute;
    left: 20px;
    bottom: 6px;
    font-size: 50px;
    line-height: 50px;
    font-weight: 400;
    color: #e2e2e2;
    text-shadow: 0 0 2px #777;
}

.exp {
    font: 700 58px/66px "Noto Sans CJK SC", sans-serif;
}

.site {
    font: 600 36px/44px "Open Sans", sans-serif;
}
```
